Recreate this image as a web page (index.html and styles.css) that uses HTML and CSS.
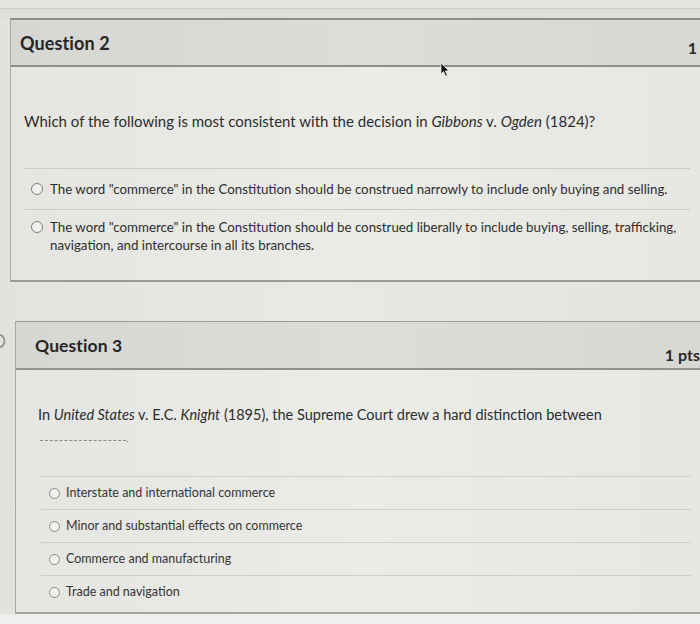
FILE: index.html
```html
<!DOCTYPE html>
<html>
<head>
<meta charset="utf-8">
<link rel="stylesheet" href="styles.css">
</head>
<body>
<div class="page">
  <div class="strip strip-a"></div>
  <div class="strip strip-b"></div>

  <section class="card card-q2">
    <header class="card-head head-q2">
      <h2 class="q-title">Question 2</h2>
      <span class="pts">1 pts</span>
    </header>
    <div class="card-body body-q2">
      <p class="q-text">Which of the following is most consistent with the decision in <em>Gibbons</em> v. <em>Ogden</em> (1824)?</p>
      <ul class="answers answers-q2">
        <li class="answer"><span class="radio"></span><span class="a-text">The word "commerce" in the Constitution should be construed narrowly to include only buying and selling.</span></li>
        <li class="answer"><span class="radio"></span><span class="a-text">The word "commerce" in the Constitution should be construed liberally to include buying, selling, trafficking, navigation, and intercourse in all its branches.</span></li>
      </ul>
    </div>
  </section>

  <div class="q3-wrap">
    <div class="flag-col">
      <svg class="flag" width="8" height="16" viewBox="0 0 8 16"><path d="M-2 1.5 A6.5 6.5 0 0 1 -2 14.5" fill="none" stroke="#8a8a88" stroke-width="1.6"/></svg>
    </div>
    <section class="card card-q3">
      <header class="card-head head-q3">
        <h2 class="q-title q3-title">Question 3</h2>
        <span class="pts pts-q3">1 pts</span>
      </header>
      <div class="card-body body-q3">
        <p class="q-text q3-text">In <em>United States</em> v. E.C. <em>Knight</em> (1895), the Supreme Court drew a hard distinction between</p>
        <div class="blank"><span class="blank-line"></span><span class="blank-dot">.</span></div>
        <ul class="answers answers-q3">
          <li class="answer a3"><span class="radio r3"></span><span class="a-text">Interstate and international commerce</span></li>
          <li class="answer a3"><span class="radio r3"></span><span class="a-text">Minor and substantial effects on commerce</span></li>
          <li class="answer a3"><span class="radio r3"></span><span class="a-text">Commerce and manufacturing</span></li>
          <li class="answer a3"><span class="radio r3"></span><span class="a-text">Trade and navigation</span></li>
        </ul>
      </div>
    </section>
  </div>

  <div class="bottom-strip"></div>

  <svg class="cursor" width="12" height="16" viewBox="0 0 12 16"><path d="M1 1 L1 12 L3.6 9.6 L5.6 14.2 L7.4 13.4 L5.4 8.9 L9 8.9 Z" fill="#111" stroke="#f2f2f0" stroke-width="0.8"/></svg>
</div>
</body>
</html>
```

FILE: styles.css
```css
html, body {
  margin: 0;
  padding: 0;
}
body {
  background: #e0e0dd;
  font-family: Lato, "Open Sans", sans-serif;
  color: #2b2b2b;
}
.page {
  position: relative;
  width: 700px;
  height: 624px;
  overflow: hidden;
  background: linear-gradient(90deg, #e2e2df 0%, #e8e8e5 45%, #e3e3e0 100%);
}
.strip-a {
  height: 8px;
  border-bottom: 1px solid #cdcdca;
  background: #e4e4e1;
}
.strip-b {
  height: 9px;
  background: #dfdfdc;
}
.card {
  box-sizing: border-box;
}
.card-q2 {
  margin-left: 10px;
  width: 720px;
  border-top: 2px solid #8d8d8b;
  border-left: 1px solid #a9a9a7;
  border-bottom: 2px solid #9a9a98;
}
.card-head {
  display: flex;
  justify-content: space-between;
  align-items: center;
  background: linear-gradient(90deg, #d6d6d3 0%, #dcdcd9 50%, #d7d7d4 100%);
  border-bottom: 2px solid #8e8e8c;
}
.head-q2 {
  height: 45px;
  padding: 0 7px 0 9px;
}
.q-title {
  margin: 0;
  font-size: 18px;
  font-weight: 700;
  color: #262626;
  letter-spacing: 0.1px;
}
.pts {
  font-size: 16px;
  font-weight: 700;
  color: #2a2a2a;
  margin-top: 10px;
}
.card-body {
  background: linear-gradient(90deg, #e5e5e2 0%, #ebebe8 50%, #e6e6e3 100%);
}
.body-q2 {
  padding: 44px 0 15px 13px;
}
.q-text {
  margin: 0;
  font-size: 15px;
  line-height: 20px;
  color: #2d2d2d;
}
.answers {
  list-style: none;
  margin: 0;
  padding: 0;
}
.answers-q2 {
  margin-top: 37px;
  width: 665px;
  margin-left: 1px;
}
.answer {
  display: flex;
  align-items: flex-start;
  border-top: 1px solid #cbcbc8;
  padding: 8px 0 11px 6px;
}
.answers-q2 .answer:first-child {
  padding-top: 11px;
}
.radio {
  flex: none;
  box-sizing: border-box;
  width: 12px;
  height: 12px;
  border: 1px solid #7d7d7b;
  border-radius: 50%;
  background: #f1f1ef;
  margin-top: 3px;
  margin-right: 7px;
}
.a-text {
  font-size: 13.3px;
  line-height: 18px;
  color: #2e2e2e;
}

.q3-wrap {
  display: flex;
  margin-top: 39px;
}
.flag-col {
  width: 15px;
  flex: none;
  padding-top: 12px;
}
.flag {
  display: block;
}
.card-q3 {
  width: 700px;
  flex: none;
  border-top: 1px solid #9a9a98;
  border-left: 1px solid #a9a9a7;
  border-bottom: 2px solid #a3a3a1;
}
.head-q3 {
  height: 46px;
  padding: 0 15px 0 19px;
  border-bottom: 2px solid #929290;
}
.q3-title {
  font-size: 17.5px;
}
.pts-q3 {
  margin-top: 18px;
}
.body-q3 {
  padding: 35px 0 4px 22px;
}
.q3-text {
  font-size: 14.5px;
}
.blank {
  display: flex;
  align-items: flex-end;
  height: 16px;
  margin-left: 2px;
}
.blank-line {
  width: 86px;
  border-bottom: 1px dashed #8a8a88;
}
.blank-dot {
  font-size: 10px;
  line-height: 10px;
  color: #777;
  margin-bottom: -2px;
}
.answers-q3 {
  margin-top: 35px;
  width: 650px;
  margin-left: 3px;
}
.a3 {
  padding: 8px 0 8px 8px;
  border-top-color: #cececb;
}
.r3 {
  width: 11px;
  height: 11px;
  margin-top: 2.5px;
  margin-right: 6px;
  border-color: #8a8a88;
}
.answers-q3 .a-text {
  font-size: 12.5px;
  line-height: 16px;
  color: #353535;
}
.bottom-strip {
  height: 12px;
  background: #efefed;
}
.cursor {
  position: absolute;
  left: 440px;
  top: 62px;
}
```
